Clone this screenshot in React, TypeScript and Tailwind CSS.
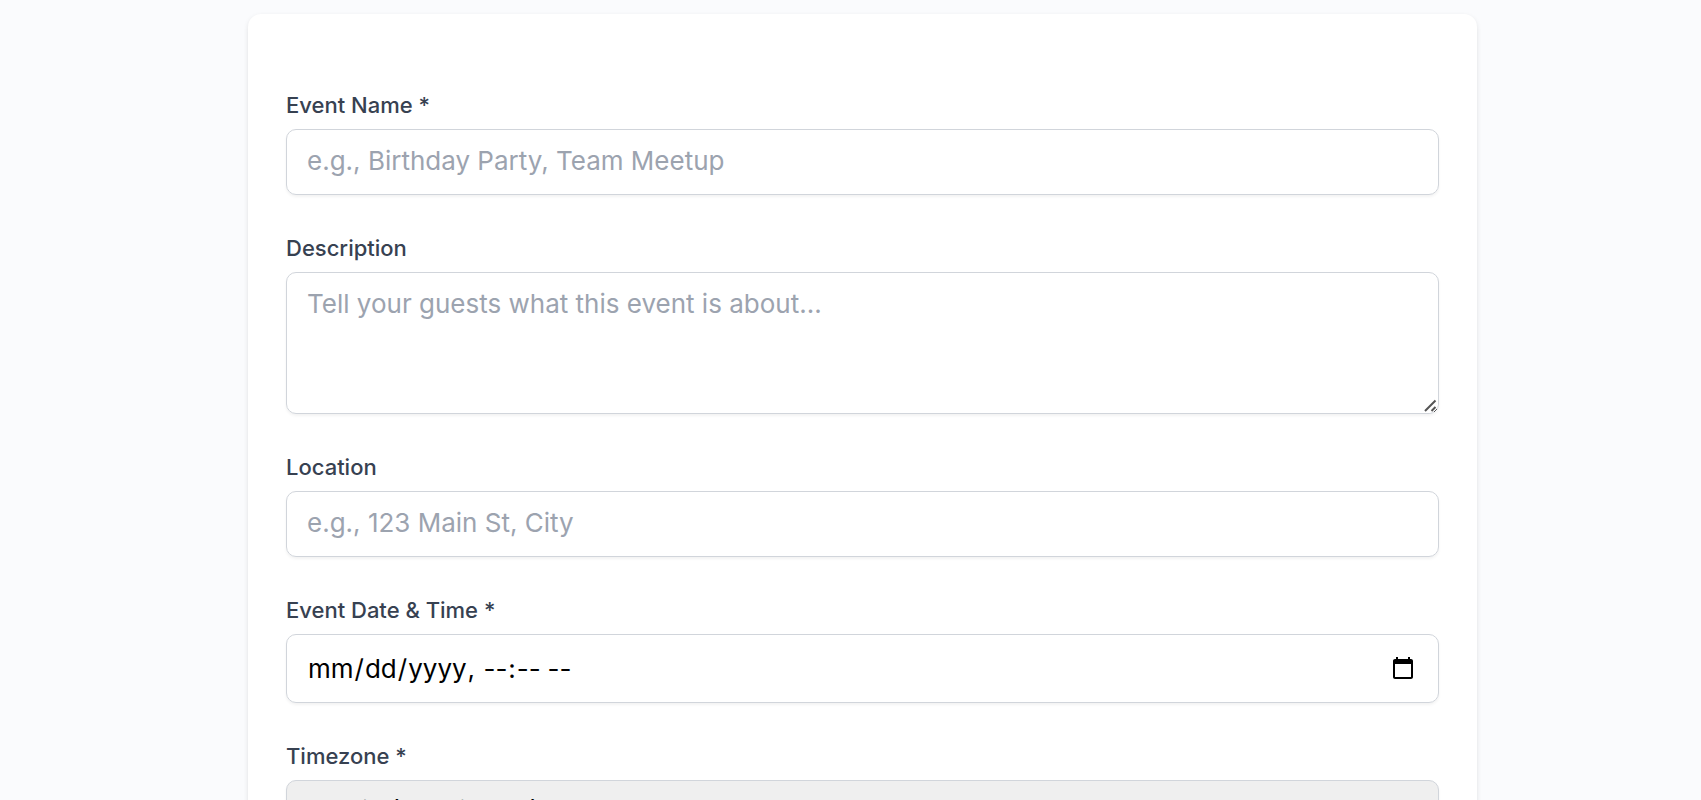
import type { ReactNode } from 'react';

const base =
  'block w-full rounded-[10px] border border-[#d1d5db] px-[20px] text-[26px] leading-[38px] shadow-[0_2px_3px_rgba(0,0,0,0.05)] placeholder:text-[#9ca3af] focus:border-indigo-500 focus:outline-none';
const control = `${base} pt-[12px] pb-[14px]`;

function Field({ id, label, children }: { id: string; label: string; children: ReactNode }) {
  return (
    <div>
      <label htmlFor={id} className="mb-[8px] block text-[22px] leading-[32px] font-medium text-[#374151]">
        {label}
      </label>
      {children}
    </div>
  );
}

export default function App() {
  return (
    <div className="min-h-screen bg-[#fafbfd] pt-[14px] pr-[26px] pl-[50px] font-['Inter',sans-serif]">
      <main className="mx-auto max-w-[1229px] rounded-[13px] bg-white px-[38px] pt-[75px] pb-[38px] shadow-[0_2px_5px_rgba(0,0,0,0.1),0_2px_3px_-2px_rgba(0,0,0,0.1)]">
        <form className="flex flex-col gap-[37px]">
          <Field id="name" label="Event Name *">
            <input id="name" type="text" placeholder="e.g., Birthday Party, Team Meetup" className={control} />
          </Field>
          <Field id="description" label="Description">
            <div className="relative">
              <textarea id="description" rows={3} placeholder="Tell your guests what this event is about..." className={control} />
              <svg className="pointer-events-none absolute right-[1px] bottom-[1px] size-[14px]" viewBox="0 0 14 14" aria-hidden="true">
                <path d="M0 0H14V6L6 14H0Z" fill="#fff" />
                <path d="M1 12L11.5 1.5M7.5 12L11.5 8" stroke="#555" strokeWidth="2" fill="none" />
              </svg>
            </div>
          </Field>
          <Field id="location" label="Location">
            <input id="location" type="text" placeholder="e.g., 123 Main St, City" className={control} />
          </Field>
          <Field id="date" label="Event Date & Time *">
            <input id="date" type="datetime-local" className={`${base} pt-[15px] pb-[14px]`} />
          </Field>
          <Field id="timezone" label="Timezone *">
            <select id="timezone" className={`${base} bg-[#efefef] py-[13px]`}>
              <option>Arctic (Russia, NE)</option>
            </select>
          </Field>
        </form>
      </main>
    </div>
  );
}
